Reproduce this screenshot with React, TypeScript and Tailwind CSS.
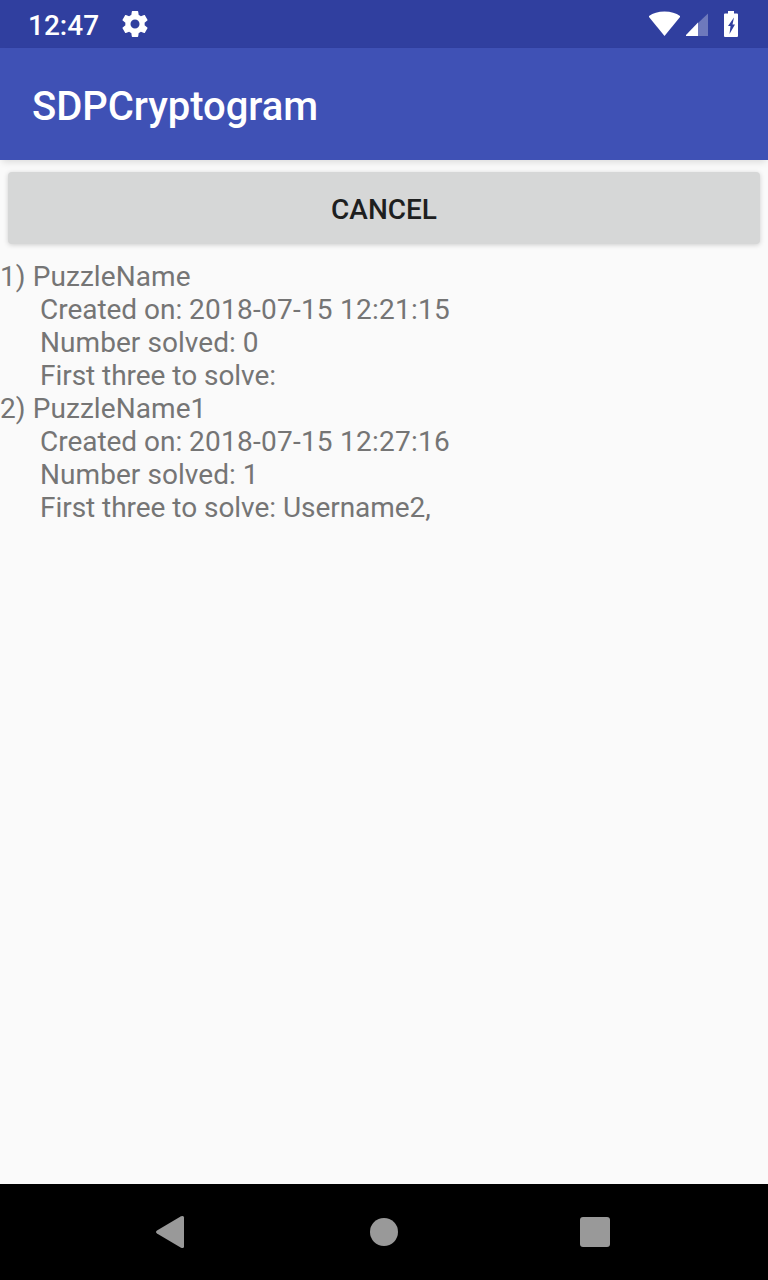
import React from "react";

const puzzles = [
  { name: "1) PuzzleName", created: "2018-07-15 12:21:15", solved: "0", solvers: "" },
  { name: "2) PuzzleName1", created: "2018-07-15 12:27:16", solved: "1", solvers: "Username2," },
];

function StatusBar() {
  return (
    <div className="flex h-12 shrink-0 items-center bg-[#303f9f] text-white">
      <span className="ml-[28px] w-[92px] pt-[2px] text-[28px] leading-[33px] font-medium">12:47</span>
      <svg className="-ml-px h-8 w-8" viewBox="-0.4 -0.4 24.8 24.8" fill="currentColor">
        <path d="M19.43 12.98c.04-.32.07-.64.07-.98s-.03-.66-.07-.98l2.110-1.650c.19-.15.24-.42.12-.64l-2-3.460c-.12-.22-.39-.3-.61-.22l-2.490 1c-.52-.4-1.080-.73-1.690-.98l-.38-2.650A.488.488 0 0 0 14 2h-4c-.25 0-.46.18-.49.42l-.38 2.650c-.61.25-1.170.59-1.690.98l-2.490-1c-.23-.09-.49 0-.61.22l-2 3.460c-.13.22-.07.49.12.64l2.110 1.650c-.04.32-.07.65-.07.98s.03.66.07.98l-2.110 1.650c-.19.15-.24.42-.12.64l2 3.460c.12.22.39.3.61.22l2.490-1c.52.4 1.080.73 1.690.98l.38 2.650c.03.24.24.42.49.42h4c.25 0 .46-.18.49-.42l.38-2.650c.61-.25 1.170-.59 1.690-.98l2.490 1c.23.09.49 0 .61-.22l2-3.460c.12-.22.07-.49-.12-.64l-2.110-1.650zM12 15.500a3.500 3.500 0 1 1 0-7 3.500 3.500 0 0 1 0 7z" />
      </svg>
      <svg className="ml-auto h-12 w-[138px]" viewBox="0 0 138 48" fill="currentColor">
        <path d="M34.500 36L19 17V16Q25 11.500 34.500 11.500T50 16V17Z" />
        <path d="M78 13.500V36H68V23Z" opacity=".3" />
        <path d="M68 22.500V36H56V35Z" />
        <path fillRule="evenodd" d="M98 11h6v2.500h3q1 0 1 1v21.500q0 1-1 1h-12q-1 0-1-1v-21.500q0-1 1-1h3zM104 17.500L98 26h2.500l-1 8 5.500-9.500h-2.500z" />
      </svg>
    </div>
  );
}

export default function App() {
  return (
    <main className="flex h-[1280px] w-[768px] flex-col overflow-hidden bg-[#fafafa] font-['Roboto',sans-serif]">
      <StatusBar />
      <header className="flex h-28 shrink-0 items-center bg-[#3f51b5] px-8 pt-[6px] shadow-[0_4px_7px_-2px_rgba(0,0,0,0.13)]">
        <h1 className="text-[40px] leading-[48px] font-medium tracking-[-0.05px] text-white">SDPCryptogram</h1>
      </header>
      <button className="mx-2 mt-3 flex h-[72px] shrink-0 items-center justify-center rounded-[4px] bg-[#d6d7d7] pt-[3px] text-[28px] font-medium text-[#1e1f1f] shadow-[0_1px_5px_rgba(0,0,0,0.18)]">
        CANCEL
      </button>
      <section className="mt-4 grow text-[28px] leading-[33px] text-[#757575]">
        {puzzles.map((puzzle) => (
          <article key={puzzle.name}>
            <h2 className="tracking-[0.08px]">{puzzle.name}</h2>
            <div className="pl-10">
              <p>
                <span className="tracking-[-0.03px]">Created on: </span>
                <span className="tracking-[0.24px]">{puzzle.created}</span>
              </p>
              <p className="tracking-[0.06px]">Number solved: {puzzle.solved}</p>
              <p className="tracking-[-0.04px]">First three to solve: {puzzle.solvers}</p>
            </div>
          </article>
        ))}
      </section>
      <nav className="flex h-24 shrink-0 bg-black text-[#999]">
        <svg className="h-24 w-full" viewBox="0 0 768 96" fill="currentColor">
          <path d="M157 46.500L181 32.300q3-1.200 3 1.200V62.500q0 2.400-3 1.200L157 49.500q-2-1.500 0-3z" />
          <circle cx="384" cy="48" r="14" />
          <rect x="580" y="33" width="30" height="30" rx="3" />
        </svg>
      </nav>
    </main>
  );
}
